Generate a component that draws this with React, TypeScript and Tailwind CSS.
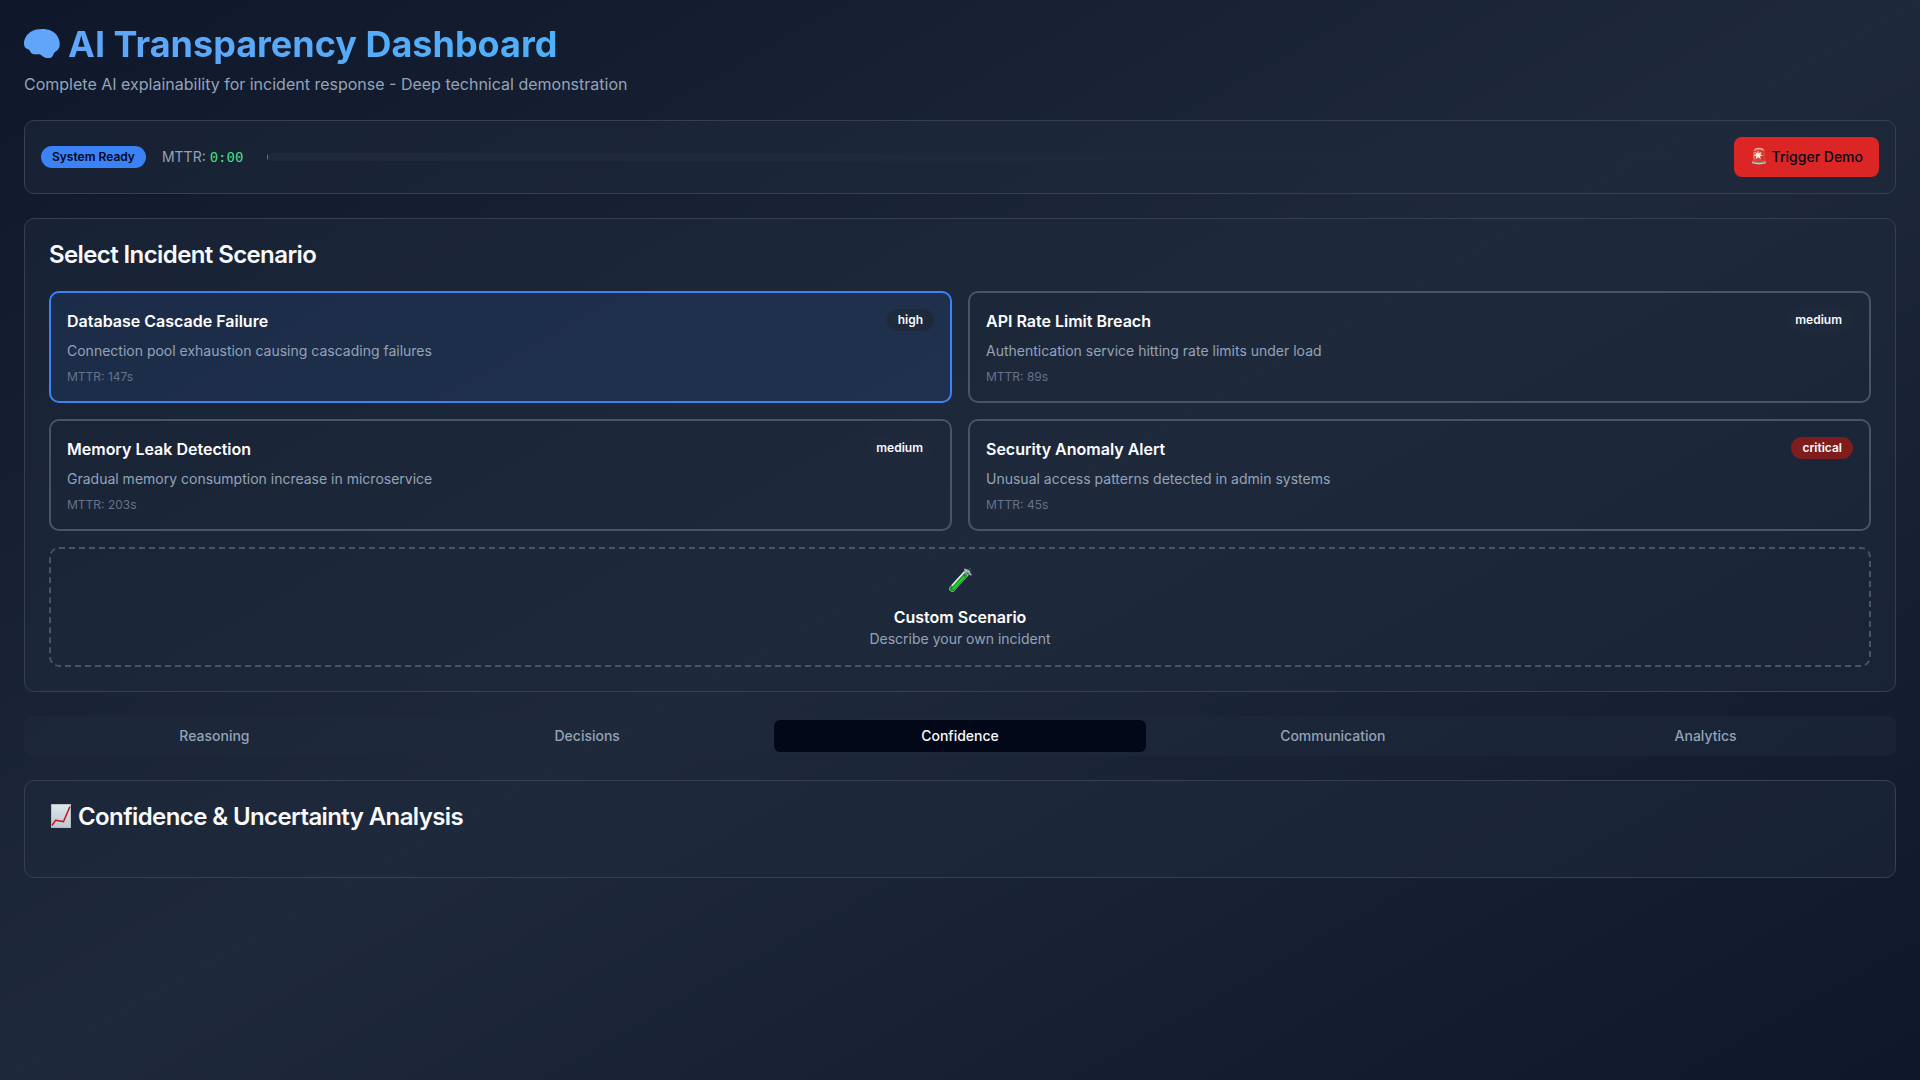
import React from "react";

const scenarios = [
  { title: "Database Cascade Failure", text: "Connection pool exhaustion causing cascading failures", mttr: "147s", level: "high" },
  { title: "API Rate Limit Breach", text: "Authentication service hitting rate limits under load", mttr: "89s", level: "medium" },
  { title: "Memory Leak Detection", text: "Gradual memory consumption increase in microservice", mttr: "203s", level: "medium" },
  { title: "Security Anomaly Alert", text: "Unusual access patterns detected in admin systems", mttr: "45s", level: "critical" },
];

const tabs = ["Reasoning", "Decisions", "Confidence", "Communication", "Analytics"];

function Brain() {
  return (
    <svg viewBox="0 0 36 30" className="h-[30px] w-9 shrink-0" aria-hidden="true">
      <path
        d="M0 14.300C0 11.500 .7 9.500 2 7.700C3.500 5 5.500 3.500 7.700 2.300C10.500 .8 14 0 17.700 0C21.500 0 25 .6 27.700 2C30.500 3.500 32.500 5.500 33.700 7.700C35.200 10.300 36 13.500 35.700 16.300C35.500 18.600 34.500 20.500 32.700 21.700C31.500 22.500 30.500 23.300 29.700 24.700C29 26.200 28.300 28 27 28.700C26 29.200 25 29.200 23.700 29C22 28.900 20.500 28.600 19.300 27.700C17.500 26.500 16.500 25.500 15 25.300C13.300 25.100 11.500 25.700 10 25.300C8.700 25 7.700 24.500 7 23.700C6.200 22.600 5.800 21 4.300 20.300C3 19.800 1.800 19.500 1 18.300C.3 17.200 0 16 0 14.300Z"
        fill="#60a5fa"
      />
    </svg>
  );
}

function Siren() {
  return (
    <svg viewBox="-1 0 18 18" className="mb-[3px] h-[18px] w-[18px]" aria-hidden="true">
      <path d="M1.200 13.500h13.600l.3 2.500q-7 3-14.200 0z" fill="#8d827f" />
      <path d="M1.200 15.700q6.800 2.200 13.600 0" stroke="#d8d0cc" strokeWidth="1" fill="none" />
      <path d="M1.800 14L2.300 3.500Q3 .5 8 .5T13.700 3.500L14.200 14Q8 16 1.800 14z" fill="#dc4030" />
      <path d="M3.300 3.500Q4.500 1.500 8 1.500T12.700 3.500" stroke="#f3a797" strokeWidth="1.300" fill="none" />
      <path d="M3 5v7.500" stroke="#ee8877" strokeWidth="1" />
      <path d="M9.500 5.500q2-1.500 2.500 0M10.500 9.500q1.500 1 1.500 3" stroke="#a31e17" strokeWidth="1" fill="none" />
      <path d="M7 3.300l.8 2.900 3-1.500-1.500 2.700 2.600 1.200-2.900.6.700 3-2.500-2-2.400 2 .4-3-2.600-.8 2.500-1.300L3.500 4.800l2.700 1.400z" fill="#ffece6" />
    </svg>
  );
}

function TestTube() {
  return (
    <svg viewBox="0 0 24 26" className="h-[26px] w-6" aria-hidden="true" fill="none">
      <path d="M19 5.500L4.300 21.700" stroke="#a3b0b2" strokeWidth="6.200" strokeLinecap="round" />
      <path d="M16.300 8.500L4.300 21.700" stroke="#10981f" strokeWidth="5" strokeLinecap="round" />
      <path d="M16 10L5.300 21.700" stroke="#35d332" strokeWidth="1.700" strokeLinecap="round" />
      <path d="M16.300 5L4 18.700" stroke="#e8eef0" strokeWidth="1.500" />
      <path d="M16.800 2.500L22.800 7.600" stroke="#a9b4b8" strokeWidth="1.800" strokeLinecap="round" />
      <path d="M18.500 5.500L21 7.500" stroke="#4d5a60" strokeWidth="1.200" />
      <circle cx="22" cy="2" r="1" fill="#1b6a34" />
      <circle cx="23.300" cy="4.500" r=".6" fill="#1b6a34" />
    </svg>
  );
}

function ChartIcon() {
  return (
    <svg viewBox="0 0 20 24" className="-mt-px mb-px ml-0.5 h-6 w-5 shrink-0" aria-hidden="true">
      <defs>
        <linearGradient id="paper" x1="0" y1="0" x2="0" y2="1">
          <stop stopColor="#dce7ef" />
          <stop offset="1" stopColor="#bcc8cf" />
        </linearGradient>
      </defs>
      <path d="M0 0h20v24H0z" fill="url(#paper)" />
      <path d="M.4 .4h19.200v23.200H.4z" fill="none" stroke="#a8b3ba" strokeWidth=".8" />
      <path d="M1 21.500L4.500 16.300l8 1.300L19 2.500" fill="none" stroke="#c9131f" strokeWidth="1.500" />
    </svg>
  );
}

function levelClass(level: string) {
  if (level === "critical") return "bg-[#7f1d1d]";
  return "bg-[#1e293b]";
}

export default function App() {
  return (
    <div className="min-h-screen bg-[linear-gradient(to_bottom_right,#0f172a,#1e293b,#0f172a)] p-6 font-['Inter',sans-serif] text-[#f8fafc]">
      <div className="flex flex-col gap-6">
        <header>
          <h1 className="flex h-10 items-center text-4xl font-bold">
            <Brain />
            <span className="ml-2 bg-[linear-gradient(to_right,#60a5fa,#4fb0f8)] bg-clip-text whitespace-nowrap text-transparent">AI Transparency Dashboard</span>
          </h1>
          <p className="mt-2 text-base text-[#94a3b8]">Complete AI explainability for incident response - Deep technical demonstration</p>
        </header>

        <section className="flex items-center gap-4 rounded-[10px] border border-[#334155] bg-[#1e293b]/50 p-4">
          <span className="rounded-full border border-transparent bg-[#3b82f6] px-2.5 py-0.5 text-xs font-semibold text-[#020817]">System Ready</span>
          <p className="text-sm text-[#94a3b8]">
            MTTR: <span className="font-['DejaVu_Sans_Mono',monospace] leading-none text-[#4ade80]">0:00</span>
          </p>
          <div className="ml-2 h-2 flex-1 overflow-hidden rounded-full bg-[#1e293b]">
            <div className="h-full w-px bg-[#3b82f6]" />
          </div>
          <button className="flex h-10 items-center gap-1 rounded-lg bg-[#dc2626] px-4 text-sm font-medium text-[#020817]">
            <Siren />
            Trigger Demo
          </button>
        </section>

        <section className="rounded-[10px] border border-[#334155] bg-[#1e293b]/50 p-6">
          <h2 className="text-2xl leading-none font-semibold tracking-tight">Select Incident Scenario</h2>
          <div className="mt-6 grid grid-cols-2 gap-4">
            {scenarios.map((s, i) => (
              <article key={s.title} className={i === 0 ? "rounded-[10px] border-2 border-[#3b82f6] bg-[#3b82f6]/10 p-4" : "rounded-[10px] border-2 border-[#475569] p-4"}>
                <div className="mb-2 flex h-6 items-start justify-between">
                  <h3 className="font-semibold text-white">{s.title}</h3>
                  <span className={`rounded-full border border-transparent px-2.5 py-0.5 text-xs font-semibold ${levelClass(s.level)}`}>{s.level}</span>
                </div>
                <p className="text-sm text-[#94a3b8]">{s.text}</p>
                <p className="mt-2 text-xs text-[#64748b]">MTTR: {s.mttr}</p>
              </article>
            ))}
            <article className="col-span-2 flex flex-col items-center rounded-[10px] border-2 border-dashed border-[#475569] p-4">
              <div className="mb-2 flex h-8 items-start pt-0.5">
                <TestTube />
              </div>
              <h3 className="font-semibold text-white">Custom Scenario</h3>
              <p className="text-sm text-[#94a3b8]">Describe your own incident</p>
            </article>
          </div>
        </section>

        <nav className="grid h-10 grid-cols-5 rounded-lg bg-[#1e293b]/50 p-1">
          {tabs.map((t) => (
            <button key={t} className={t === "Confidence" ? "rounded-md bg-[#020817] text-sm font-medium text-[#f8fafc]" : "rounded-md text-sm font-medium text-[#94a3b8]"}>
              {t}
            </button>
          ))}
        </nav>

        <section className="rounded-[10px] border border-[#334155] bg-[#1e293b]/50 p-6 pb-12">
          <h2 className="flex items-center text-2xl leading-none font-semibold tracking-tight">
            <ChartIcon />
            <span className="ml-[7px]">Confidence &amp; Uncertainty Analysis</span>
          </h2>
        </section>
      </div>
    </div>
  );
}
